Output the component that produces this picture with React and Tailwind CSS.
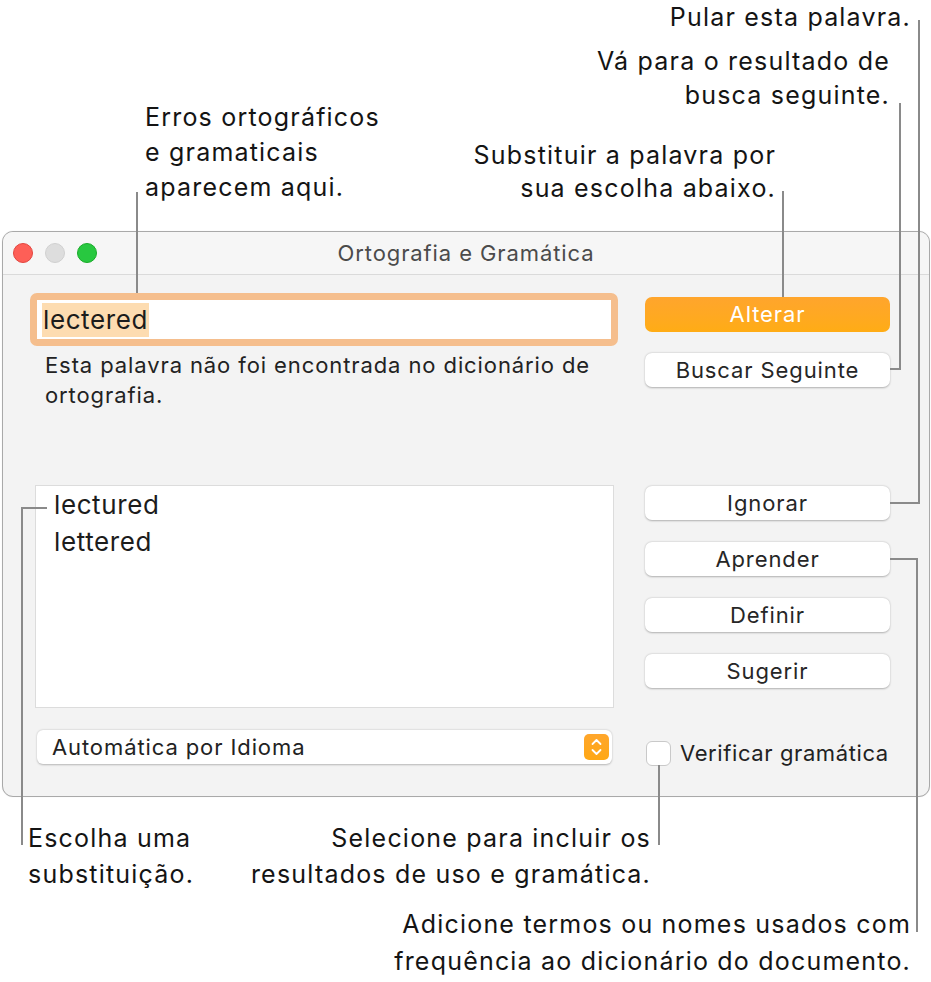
import React from 'react';

// Orange up/down stepper shown at the right end of the popup button
function Stepper() {
  return (
    <svg width="25" height="26" viewBox="0 0 25 26">
      <defs>
        <linearGradient id="stp" x1="0" y1="0" x2="0" y2="1">
          <stop offset="0" stopColor="#ffa62c" />
          <stop offset="1" stopColor="#ffa814" />
        </linearGradient>
      </defs>
      <rect x="0" y="0" width="25" height="26" rx="5" fill="url(#stp)" />
      <polyline points="8.5,10 12.5,6 16.5,10" fill="none" stroke="#fff" strokeWidth="1.8" strokeLinecap="round" strokeLinejoin="round" />
      <polyline points="8.5,16 12.5,20 16.5,16" fill="none" stroke="#fff" strokeWidth="1.8" strokeLinecap="round" strokeLinejoin="round" />
    </svg>
  );
}

function Button({ children, primary, className = '' }) {
  if (primary) {
    return (
      <div className={`h-[35px] rounded-[7px] bg-linear-to-b from-[#ffa52c] to-[#ffac14] text-white text-[22px] tracking-[0.9px] flex items-center justify-center ${className}`}>
        {children}
      </div>
    );
  }
  return (
    <div className={`h-[34px] rounded-[7px] bg-white text-[#262626] text-[22px] tracking-[0.9px] flex items-center justify-center shadow-[0_0.5px_2px_rgba(0,0,0,0.28)] ${className}`}>
      {children}
    </div>
  );
}

function App() {
  return (
    <div className="relative w-[931px] h-[982px] bg-white overflow-hidden font-['Inter',sans-serif] text-[#141414]">
      {/* Callouts above the window */}
      <div className="h-[231px] text-[25px] tracking-[1.2px]">
        <div className="text-right pr-[20px] leading-[34px]">Pular esta palavra.</div>
        <div className="text-right pr-[41px] mt-[10px] leading-[34px]">
          Vá para o resultado de<br />busca seguinte.
        </div>
        <div className="flex justify-between mt-[-12px]">
          <div className="ml-[145px] leading-[35px]">
            Erros ortográficos<br />e gramaticais<br />aparecem aqui.
          </div>
          <div className="mr-[155px] mt-[39px] text-right leading-[33px]">
            Substituir a palavra por<br />sua escolha abaixo.
          </div>
        </div>
      </div>

      {/* Spelling and grammar window */}
      <div className="ml-[2px] w-[928px] h-[566px] border border-[#a9a9a9] rounded-[11px] overflow-hidden bg-[#f3f3f3] shadow-[0_0_1px_rgba(0,0,0,0.15)]">
        <div className="h-[43px] bg-[#f6f6f6] border-b border-[#dadada] grid grid-cols-[1fr_auto_1fr] items-center">
          <div className="flex items-center gap-[12px] pl-[10px]">
            <div className="w-[20px] h-[20px] rounded-full bg-[#fe5f57] border border-[#e2463f]" />
            <div className="w-[20px] h-[20px] rounded-full bg-[#dddddd] border border-[#d0d0d0]" />
            <div className="w-[20px] h-[20px] rounded-full bg-[#28c840] border border-[#1aab29]" />
          </div>
          <div className="text-[22px] tracking-[0.9px] text-[#4b4b4b]">Ortografia e Gramática</div>
          <div />
        </div>

        <div className="flex items-start pl-[27px]">
          {/* left column */}
          <div className="w-[588px] pt-[18px]">
            <div className="h-[53px] border-[7px] border-[#f5be8d] rounded-[7px] bg-white flex items-center pl-[5px]">
              <span className="bg-[#fddcb1] text-[26px] tracking-[0.6px] leading-[34px] px-[1px] text-[#1c1c1c]">lectered</span>
            </div>
            <div className="mt-[4px] pl-[15px] text-[22px] tracking-[0.9px] leading-[30px] text-[#222] whitespace-nowrap">
              Esta palavra não foi encontrada no dicionário de<br />ortografia.
            </div>
            <div className="mt-[75px] ml-[5px] w-[579px] h-[223px] bg-white border border-[#dcdcdc] pl-[18px] text-[26px] tracking-[0.6px] leading-[37px] text-[#1c1c1c]">
              <div>lectured</div>
              <div>lettered</div>
            </div>
            <div className="mt-[22px] ml-[7px] w-[575px] h-[34px] rounded-[6px] bg-white shadow-[0_0.5px_2px_rgba(0,0,0,0.25)] flex items-center justify-between pl-[15px] pr-[3px]">
              <span className="text-[22px] tracking-[0.9px] text-[#222]">Automática por Idioma</span>
              <Stepper />
            </div>
          </div>

          {/* right column */}
          <div className="ml-[27px] w-[245px] pt-[22px] flex flex-col">
            <Button primary>Alterar</Button>
            <Button className="mt-[21px]">Buscar Seguinte</Button>
            <Button className="mt-[99px]">Ignorar</Button>
            <Button className="mt-[22px]">Aprender</Button>
            <Button className="mt-[22px]">Definir</Button>
            <Button className="mt-[22px]">Sugerir</Button>
            <div className="mt-[49px] flex items-center gap-[9px] pl-[1px]">
              <div className="w-[25px] h-[25px] rounded-[6px] bg-white border border-[#c9c9c9]" />
              <span className="text-[22px] tracking-[0.6px] text-[#222] whitespace-nowrap">Verificar gramática</span>
            </div>
          </div>
        </div>
      </div>

      {/* Callouts below the window */}
      <div className="text-[25px] tracking-[1.2px]">
        <div className="flex mt-[23px] leading-[36px]">
          <div className="ml-[28px]">Escolha uma<br />substituição.</div>
          <div className="ml-auto mr-[280px] text-right">
            Selecione para incluir os<br />resultados de uso e gramática.
          </div>
        </div>
        <div className="mt-[14px] pr-[20px] text-right leading-[37px]">
          Adicione termos ou nomes usados com<br />frequência ao dicionário do documento.
        </div>
      </div>

      {/* Leader lines */}
      <svg className="absolute inset-0 pointer-events-none" width="931" height="982">
        <g fill="none" stroke="#8a8a8a" strokeWidth="2">
          <polyline points="137,192 137,293" />
          <polyline points="783,191 783,297" />
          <polyline points="900,103 900,369 890,369" />
          <polyline points="919,20 919,503 890,503" />
          <polyline points="890,559 917,559 917,932" />
          <polyline points="47,508 22,508 22,845" />
          <polyline points="659,765 659,845" />
        </g>
      </svg>
    </div>
  );
}

export default App;
